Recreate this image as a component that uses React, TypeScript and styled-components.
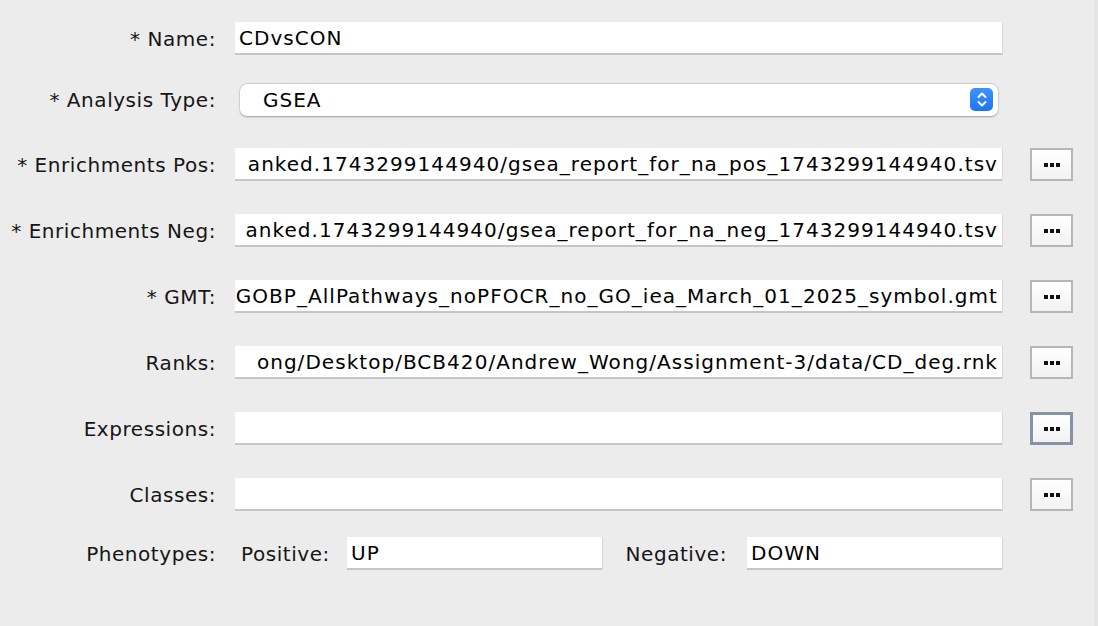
import React from "react";
import styled, { createGlobalStyle } from "styled-components";

const Global = createGlobalStyle`
  html, body { margin: 0; padding: 0; background: #ececec; }
  body { font-family: "DejaVu Sans", "Lucida Grande", sans-serif; font-size: 20px; color: #111; }
  * { box-sizing: border-box; }
`;

const Window = styled.div`
  width: 1098px;
  height: 626px;
  background: #ececec;
  border-right: 4px solid #e4e4e4;
  display: flex;
  flex-direction: column;
  padding-top: 22px;
  overflow: hidden;
`;

const Row = styled.div<{ $top: number }>`
  display: grid;
  grid-template-columns: 216px 767px 43px;
  column-gap: 19px;
  align-items: center;
  height: 33px;
  margin-top: ${(p) => p.$top}px;
  & > :nth-child(3) { margin-left: 9px; }
`;

const Label = styled.div`
  text-align: right;
  white-space: nowrap;
  color: #161616;
  letter-spacing: 0.55px;
`;

const Field = styled.div<{ $end?: boolean }>`
  height: 33px;
  background: #fff;
  border-bottom: 2px solid #c6c6c6;
  box-shadow: 1px 0 0 #d8d8d8;
  display: flex;
  align-items: center;
  justify-content: ${(p) => (p.$end ? "flex-end" : "flex-start")};
  padding: 0 4px 0 4px;
  overflow: hidden;
  white-space: nowrap;
  color: #000;
  letter-spacing: 1.04px;
`;

const Combo = styled.div`
  height: 32px;
  width: 758px;
  margin-left: 5px;
  background: #fff;
  border-radius: 7px;
  box-shadow: 0 0.5px 2px rgba(0, 0, 0, 0.3), 0 0 0 0.5px rgba(0, 0, 0, 0.08);
  display: flex;
  align-items: center;
  justify-content: space-between;
  padding: 0 5px 0 23px;
  color: #000;
  letter-spacing: 1px;
`;

const Stepper = styled.div`
  width: 23px;
  height: 23px;
  border-radius: 5px;
  background: linear-gradient(#3f93fb, #1b74f6);
  display: flex;
  align-items: center;
  justify-content: center;
`;

const Browse = styled.button<{ $focused?: boolean }>`
  width: 43px;
  height: 33px;
  padding: 0;
  border: ${(p) => (p.$focused ? "3px solid #8593a8" : "2px solid #b6b6b6")};
  background: linear-gradient(#ffffff, #f2f2f2);
  display: flex;
  align-items: center;
  justify-content: center;
  gap: 2px;
  cursor: default;
`;

const Dot = styled.span`
  width: 4px;
  height: 4px;
  background: #111;
`;

const PhenoRow = styled.div`
  display: flex;
  align-items: center;
  height: 33px;
  margin-top: 26px;
`;

const PhenoLabel = styled(Label)<{ $w: number; $gap: number; $left?: boolean }>`
  width: ${(p) => p.$w}px;
  margin-right: ${(p) => p.$gap}px;
  text-align: ${(p) => (p.$left ? "left" : "right")};
`;

const SmallField = styled(Field)`
  width: 255px;
`;

const Dots = ({ focused }: { focused?: boolean }) => (
  <Browse $focused={focused}>
    <Dot />
    <Dot />
    <Dot />
  </Browse>
);

const rows = [
  { label: "* Enrichments Pos:", value: "anked.1743299144940/gsea_report_for_na_pos_1743299144940.tsv", top: 32 },
  { label: "* Enrichments Neg:", value: "anked.1743299144940/gsea_report_for_na_neg_1743299144940.tsv", top: 33 },
  { label: "* GMT:", value: "GOBP_AllPathways_noPFOCR_no_GO_iea_March_01_2025_symbol.gmt", top: 33 },
  { label: "Ranks:", value: "ong/Desktop/BCB420/Andrew_Wong/Assignment-3/data/CD_deg.rnk", top: 33 },
  { label: "Expressions:", value: "", top: 33, focused: true },
  { label: "Classes:", value: "", top: 33 },
];

export default function App() {
  return (
    <>
      <Global />
      <Window>
        <Row $top={0}>
          <Label>* Name:</Label>
          <Field>CDvsCON</Field>
        </Row>
        <Row $top={28}>
          <Label>* Analysis Type:</Label>
          <Combo>
            <span>GSEA</span>
            <Stepper>
              <svg width="12" height="17" viewBox="0 0 12 17" fill="none" stroke="#fff" strokeWidth="2" strokeLinecap="round" strokeLinejoin="round">
                <path d="M2.5 6 L6 2.5 L9.5 6" />
                <path d="M2.5 11 L6 14.5 L9.5 11" />
              </svg>
            </Stepper>
          </Combo>
        </Row>
        {rows.map((r) => (
          <Row key={r.label} $top={r.top}>
            <Label>{r.label}</Label>
            <Field $end>{r.value}</Field>
            <Dots focused={r.focused} />
          </Row>
        ))}
        <PhenoRow>
          <PhenoLabel $w={216} $gap={25}>Phenotypes:</PhenoLabel>
          <PhenoLabel $w={88} $gap={18} $left>Positive:</PhenoLabel>
          <SmallField>UP</SmallField>
          <PhenoLabel $w={125} $gap={20}>Negative:</PhenoLabel>
          <SmallField>DOWN</SmallField>
        </PhenoRow>
      </Window>
    </>
  );
}
